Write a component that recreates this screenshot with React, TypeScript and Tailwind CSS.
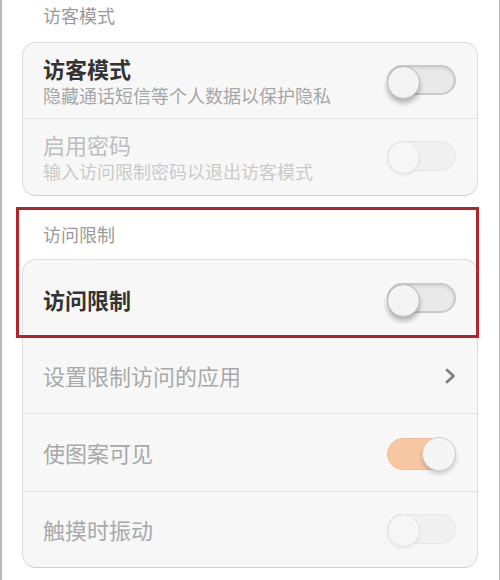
import React from "react";

type ToggleState = "off" | "on" | "disabled";

function Toggle({ state }: { state: ToggleState }) {
  if (state === "on") {
    return (
      <div className="relative w-[69px] h-[32px] shrink-0">
        <div className="absolute inset-x-0 top-[1px] h-[32px] rounded-full bg-[#f7c7a3] border border-[#f2bd96]" />
        <div className="absolute right-0 top-[0px] w-[34px] h-[34px] rounded-full bg-[#f4f4f4] border border-[#d9cfc8] shadow-[0_3px_4px_rgba(0,0,0,0.18)]" />
      </div>
    );
  }
  if (state === "disabled") {
    return (
      <div className="relative w-[69px] h-[32px] shrink-0">
        <div className="absolute inset-x-0 top-0 h-[30px] rounded-full bg-[#f0f0f0] border border-[#e6e6e6]" />
        <div className="absolute left-0 top-[0px] w-[33px] h-[33px] rounded-full bg-[#f6f6f6] border border-[#e3e3e3] shadow-[0_2px_3px_rgba(0,0,0,0.05)]" />
      </div>
    );
  }
  return (
    <div className="relative w-[69px] h-[32px] shrink-0">
      <div className="absolute inset-x-0 top-0 h-[30px] rounded-full bg-[#e9e9e9] border-2 border-[#c9c9c9] shadow-[inset_0_2px_3px_rgba(0,0,0,0.08)]" />
      <div className="absolute left-0 top-[1px] w-[33px] h-[33px] rounded-full bg-[#f3f3f3] border border-[#b9b9b9] shadow-[0_4px_5px_rgba(0,0,0,0.28)]" />
    </div>
  );
}

function Chevron() {
  return (
    <svg width="12" height="16" viewBox="0 0 12 16" className="shrink-0">
      <path d="M3 2 L9.5 8 L3 14" fill="none" stroke="#7f7f7f" strokeWidth="2.8" strokeLinecap="round" strokeLinejoin="round" />
    </svg>
  );
}

export default function App() {
  return (
    <div
      className="w-[500px] h-[580px] bg-white overflow-hidden border-l-2 border-r border-[#b8b8b8]"
      style={{ fontFamily: '"Noto Sans CJK SC", "Noto Sans", sans-serif' }}
    >
      <div className="h-[42px] pl-[41px] pt-[2px] text-[18px] leading-[26px] text-[#9a9a9a]">访客模式</div>

      <div className="ml-[20px] mr-[21px] rounded-[14px] border border-[#dcdcdc] border-b-[#d2d2d2] bg-[#f7f7f7] overflow-hidden">
        <div className="h-[76px] flex items-center justify-between pl-[20px] pr-[21px] border-b border-[#e3e3e3]">
          <div className="flex flex-col">
            <div className="text-[22px] leading-[28px] font-bold text-[#333333]">访客模式</div>
            <div className="text-[18px] leading-[26px] text-[#a6a6a6]">隐藏通话短信等个人数据以保护隐私</div>
          </div>
          <Toggle state="off" />
        </div>
        <div className="h-[76px] flex items-center justify-between pl-[20px] pr-[21px]">
          <div className="flex flex-col">
            <div className="text-[22px] leading-[28px] text-[#bdbdbd]">启用密码</div>
            <div className="text-[18px] leading-[26px] text-[#cacaca]">输入访问限制密码以退出访客模式</div>
          </div>
          <Toggle state="disabled" />
        </div>
      </div>

      <div className="relative">
        <div className="h-[63px] pl-[41px] flex items-end pb-[12px] text-[18px] leading-[26px] text-[#9a9a9a]">访问限制</div>

        <div className="ml-[20px] mr-[21px] rounded-[14px] border border-[#dcdcdc] border-b-[#d2d2d2] bg-[#f7f7f7] overflow-hidden">
          <div className="h-[78px] flex items-center justify-between pl-[20px] pr-[21px] border-b border-[#e3e3e3]">
            <div className="text-[22px] leading-[28px] font-bold text-[#333333]">访问限制</div>
            <Toggle state="off" />
          </div>
          <div className="h-[76px] flex items-center justify-between pl-[20px] pr-[21px] border-b border-[#e3e3e3]">
            <div className="-mt-[2px] text-[22px] leading-[28px] text-[#a9a9a9]">设置限制访问的应用</div>
            <Chevron />
          </div>
          <div className="h-[78px] flex items-center justify-between pl-[20px] pr-[21px] border-b border-[#e3e3e3]">
            <div className="-mt-[2px] text-[22px] leading-[28px] text-[#a9a9a9]">使图案可见</div>
            <Toggle state="on" />
          </div>
          <div className="h-[75px] flex items-center justify-between pl-[20px] pr-[21px]">
            <div className="-mt-[2px] text-[22px] leading-[28px] text-[#a9a9a9]">触摸时振动</div>
            <Toggle state="disabled" />
          </div>
        </div>

        <div className="absolute left-[14px] top-[11px] w-[463px] h-[131px] border-[3px] border-[#b3242b] pointer-events-none" />
      </div>
    </div>
  );
}
